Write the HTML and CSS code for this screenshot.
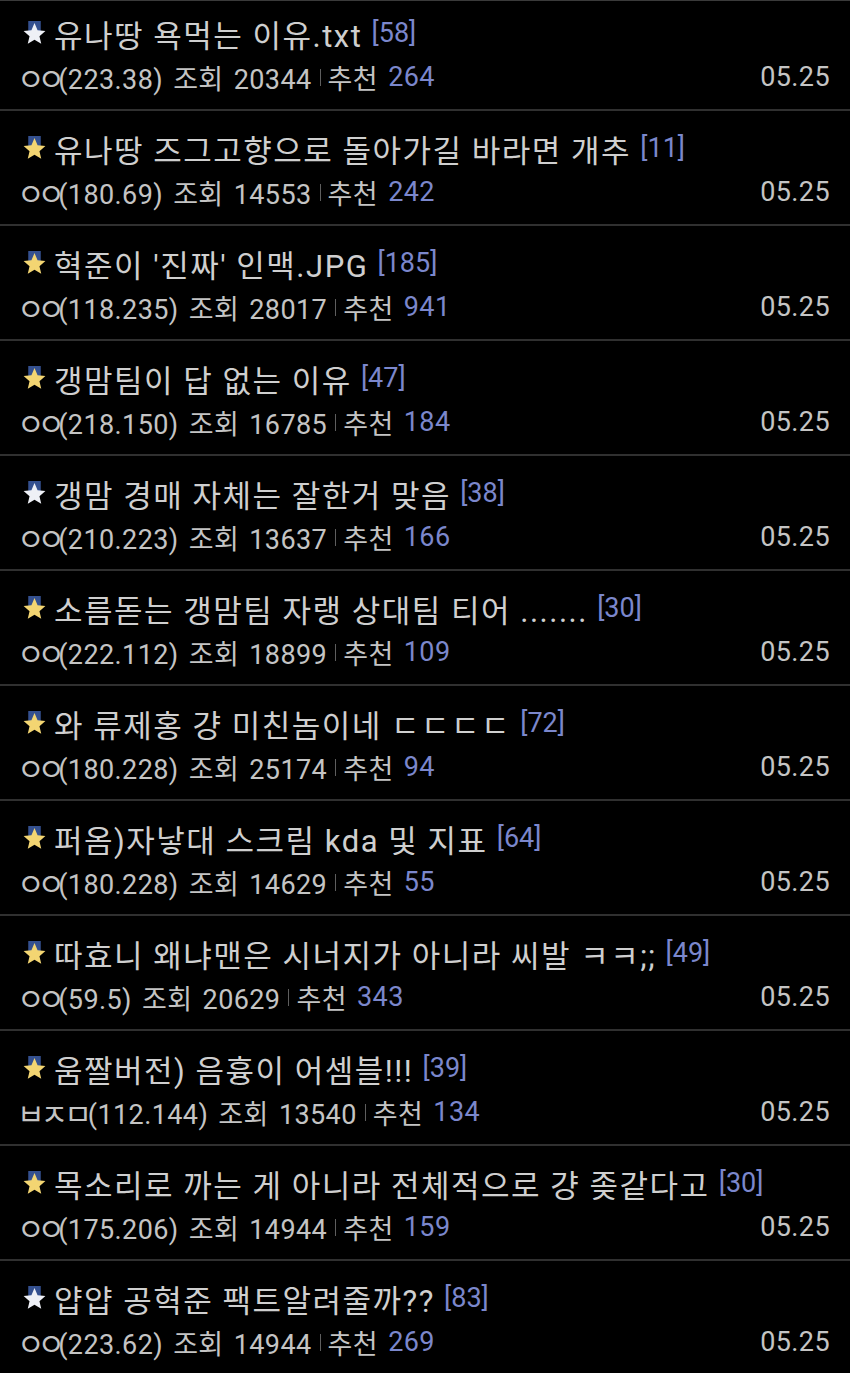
FILE: index.html
```html
<!DOCTYPE html>
<html lang="ko">
<head>
    <meta charset="UTF-8">
    <title>개념글</title>
    <link rel="stylesheet" href="styles.css">
</head>
<body>
    <ul class="post-list">
        <li class="post">
            <div class="post-title"><svg class="star white" viewBox="0 0 24 24"><rect x="6" y="0" width="12" height="10"/><polygon points="12,2 14.94,8.95 22.46,9.6 16.76,14.55 18.47,21.9 12,18 5.53,21.9 7.24,14.55 1.54,9.6 9.06,8.95"/></svg>유나땅 욕먹는 이유.txt <span class="cnt">[58]</span></div>
            <div class="post-meta"><span><i class="nick">ㅇㅇ</i>(223.38) 조회 20344<i class="bar"></i>추천 <b class="cnt">264</b></span><span>05.25</span></div>
        </li>
        <li class="post">
            <div class="post-title"><svg class="star gold" viewBox="0 0 24 24"><rect x="6" y="0" width="12" height="10"/><polygon points="12,2 14.94,8.95 22.46,9.6 16.76,14.55 18.47,21.9 12,18 5.53,21.9 7.24,14.55 1.54,9.6 9.06,8.95"/></svg>유나땅 즈그고향으로 돌아가길 바라면 개추 <span class="cnt">[11]</span></div>
            <div class="post-meta"><span><i class="nick">ㅇㅇ</i>(180.69) 조회 14553<i class="bar"></i>추천 <b class="cnt">242</b></span><span>05.25</span></div>
        </li>
        <li class="post">
            <div class="post-title"><svg class="star gold" viewBox="0 0 24 24"><rect x="6" y="0" width="12" height="10"/><polygon points="12,2 14.94,8.95 22.46,9.6 16.76,14.55 18.47,21.9 12,18 5.53,21.9 7.24,14.55 1.54,9.6 9.06,8.95"/></svg>혁준이 '진짜' 인맥.JPG <span class="cnt">[185]</span></div>
            <div class="post-meta"><span><i class="nick">ㅇㅇ</i>(118.235) 조회 28017<i class="bar"></i>추천 <b class="cnt">941</b></span><span>05.25</span></div>
        </li>
        <li class="post">
            <div class="post-title"><svg class="star gold" viewBox="0 0 24 24"><rect x="6" y="0" width="12" height="10"/><polygon points="12,2 14.94,8.95 22.46,9.6 16.76,14.55 18.47,21.9 12,18 5.53,21.9 7.24,14.55 1.54,9.6 9.06,8.95"/></svg>갱맘팀이 답 없는 이유 <span class="cnt">[47]</span></div>
            <div class="post-meta"><span><i class="nick">ㅇㅇ</i>(218.150) 조회 16785<i class="bar"></i>추천 <b class="cnt">184</b></span><span>05.25</span></div>
        </li>
        <li class="post">
            <div class="post-title"><svg class="star white" viewBox="0 0 24 24"><rect x="6" y="0" width="12" height="10"/><polygon points="12,2 14.94,8.95 22.46,9.6 16.76,14.55 18.47,21.9 12,18 5.53,21.9 7.24,14.55 1.54,9.6 9.06,8.95"/></svg>갱맘 경매 자체는 잘한거 맞음 <span class="cnt">[38]</span></div>
            <div class="post-meta"><span><i class="nick">ㅇㅇ</i>(210.223) 조회 13637<i class="bar"></i>추천 <b class="cnt">166</b></span><span>05.25</span></div>
        </li>
        <li class="post">
            <div class="post-title"><svg class="star gold" viewBox="0 0 24 24"><rect x="6" y="0" width="12" height="10"/><polygon points="12,2 14.94,8.95 22.46,9.6 16.76,14.55 18.47,21.9 12,18 5.53,21.9 7.24,14.55 1.54,9.6 9.06,8.95"/></svg>소름돋는 갱맘팀 자랭 상대팀 티어 ....... <span class="cnt">[30]</span></div>
            <div class="post-meta"><span><i class="nick">ㅇㅇ</i>(222.112) 조회 18899<i class="bar"></i>추천 <b class="cnt">109</b></span><span>05.25</span></div>
        </li>
        <li class="post">
            <div class="post-title"><svg class="star gold" viewBox="0 0 24 24"><rect x="6" y="0" width="12" height="10"/><polygon points="12,2 14.94,8.95 22.46,9.6 16.76,14.55 18.47,21.9 12,18 5.53,21.9 7.24,14.55 1.54,9.6 9.06,8.95"/></svg>와 류제홍 걍 미친놈이네 ㄷㄷㄷㄷ <span class="cnt">[72]</span></div>
            <div class="post-meta"><span><i class="nick">ㅇㅇ</i>(180.228) 조회 25174<i class="bar"></i>추천 <b class="cnt">94</b></span><span>05.25</span></div>
        </li>
        <li class="post">
            <div class="post-title"><svg class="star gold" viewBox="0 0 24 24"><rect x="6" y="0" width="12" height="10"/><polygon points="12,2 14.94,8.95 22.46,9.6 16.76,14.55 18.47,21.9 12,18 5.53,21.9 7.24,14.55 1.54,9.6 9.06,8.95"/></svg>퍼옴)자낳대 스크림 kda 및 지표 <span class="cnt">[64]</span></div>
            <div class="post-meta"><span><i class="nick">ㅇㅇ</i>(180.228) 조회 14629<i class="bar"></i>추천 <b class="cnt">55</b></span><span>05.25</span></div>
        </li>
        <li class="post">
            <div class="post-title"><svg class="star gold" viewBox="0 0 24 24"><rect x="6" y="0" width="12" height="10"/><polygon points="12,2 14.94,8.95 22.46,9.6 16.76,14.55 18.47,21.9 12,18 5.53,21.9 7.24,14.55 1.54,9.6 9.06,8.95"/></svg>따효니 왜냐맨은 시너지가 아니라 씨발 ㅋㅋ;; <span class="cnt">[49]</span></div>
            <div class="post-meta"><span><i class="nick">ㅇㅇ</i>(59.5) 조회 20629<i class="bar"></i>추천 <b class="cnt">343</b></span><span>05.25</span></div>
        </li>
        <li class="post">
            <div class="post-title"><svg class="star gold" viewBox="0 0 24 24"><rect x="6" y="0" width="12" height="10"/><polygon points="12,2 14.94,8.95 22.46,9.6 16.76,14.55 18.47,21.9 12,18 5.53,21.9 7.24,14.55 1.54,9.6 9.06,8.95"/></svg>움짤버전) 음흉이 어셈블!!! <span class="cnt">[39]</span></div>
            <div class="post-meta"><span><i class="nick wide">ㅂㅈㅁ</i>(112.144) 조회 13540<i class="bar"></i>추천 <b class="cnt">134</b></span><span>05.25</span></div>
        </li>
        <li class="post">
            <div class="post-title"><svg class="star gold" viewBox="0 0 24 24"><rect x="6" y="0" width="12" height="10"/><polygon points="12,2 14.94,8.95 22.46,9.6 16.76,14.55 18.47,21.9 12,18 5.53,21.9 7.24,14.55 1.54,9.6 9.06,8.95"/></svg>목소리로 까는 게 아니라 전체적으로 걍 좆같다고 <span class="cnt">[30]</span></div>
            <div class="post-meta"><span><i class="nick">ㅇㅇ</i>(175.206) 조회 14944<i class="bar"></i>추천 <b class="cnt">159</b></span><span>05.25</span></div>
        </li>
        <li class="post">
            <div class="post-title"><svg class="star white" viewBox="0 0 24 24"><rect x="6" y="0" width="12" height="10"/><polygon points="12,2 14.94,8.95 22.46,9.6 16.76,14.55 18.47,21.9 12,18 5.53,21.9 7.24,14.55 1.54,9.6 9.06,8.95"/></svg>얍얍 공혁준 팩트알려줄까?? <span class="cnt">[83]</span></div>
            <div class="post-meta"><span><i class="nick">ㅇㅇ</i>(223.62) 조회 14944<i class="bar"></i>추천 <b class="cnt">269</b></span><span>05.25</span></div>
        </li>
    </ul>
</body>
</html>
```

FILE: styles.css
```css
body {
    margin: 0;
    background-color: #000;
    border-top: 1px solid #3a3a3a;
    font-family: Roboto, "Noto Sans CJK KR", sans-serif;
    color: #c9c9c9;
    overflow: hidden;
}
.post-list {
    list-style: none;
    margin: -5px 0 0 0;
    padding: 0;
}
.post {
    height: 115px;
    box-sizing: border-box;
    padding: 17px 20px 0 22px;
    border-bottom: 2px solid #303030;
}
.post-title {
    display: flex;
    align-items: center;
    height: 40px;
    font-size: 31px;
    letter-spacing: 1.5px;
    white-space: pre;
    color: #cfcfcf;
}
.post-title .cnt {
    font-size: 27px;
    letter-spacing: 0;
}
.post-meta {
    display: flex;
    justify-content: space-between;
    align-items: center;
    height: 40px;
    margin-top: 4px;
    font-size: 27px;
    letter-spacing: 0.4px;
    word-spacing: 3px;
    color: #c4c4c4;
}
.post-meta span {
    display: flex;
    align-items: center;
    white-space: pre;
}
.nick {
    font-style: normal;
    font-size: 30px;
    letter-spacing: -7px;
    margin: 5px 0 0 -5px;
    line-height: 1;
}
.nick.wide {
    letter-spacing: -4px;
}
.cnt {
    color: #7b87cc;
    font-weight: normal;
}
.bar {
    display: inline-block;
    width: 1px;
    height: 17px;
    background: #5e5e5e;
    margin: 0 7px 0 8px;
}
.star {
    width: 25px;
    height: 25px;
    margin-right: 7px;
    flex: none;
}
.star rect {
    fill: #34508f;
}
.star.white polygon {
    fill: #eef0f6;
}
.star.gold polygon {
    fill: #f3d572;
}
```
